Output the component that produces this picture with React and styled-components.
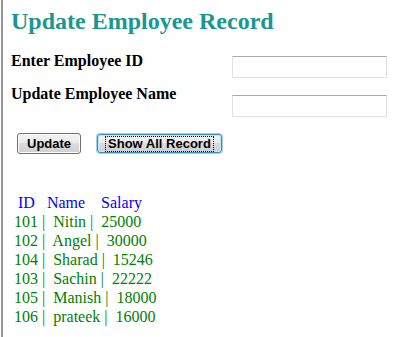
import styled, { createGlobalStyle } from "styled-components";

const GlobalStyle = createGlobalStyle`
  body {
    margin: 0;
    background: #fff;
    font-family: "Liberation Serif", "Times New Roman", serif;
  }
`;

const Page = styled.div`
  margin-left: 1px;
  border-left: 2px solid #959595;
  min-height: 337px;
  padding: 6px 0 0 8px;
  box-sizing: border-box;
`;

const Title = styled.h1`
  margin: 0;
  font-size: 24px;
  line-height: 30px;
  font-weight: bold;
  color: #1a9792;
`;

const Form = styled.div`
  display: flex;
  flex-direction: column;
  gap: 6px;
  margin-top: 15px;
`;

const Row = styled.div`
  display: flex;
  align-items: flex-start;
`;

const Label = styled.div`
  width: 221px;
  font-size: 16px;
  line-height: 19px;
  font-weight: bold;
  color: #000;
`;

const Input = styled.input`
  box-sizing: border-box;
  width: 155px;
  height: 22px;
  margin: ${(p) => p.$offset}px 0 0;
  padding: 0 3px;
  border: 1px solid #e0e1e6;
  border-top-color: #a8a8a8;
  border-radius: 0;
  outline: none;
  background: #fff;
`;

const Buttons = styled.div`
  display: flex;
  gap: 16px;
  margin: 16px 0 0 6px;
`;

const Button = styled.button`
  height: ${(p) => (p.$focused ? 19 : 21)}px;
  margin-top: ${(p) => (p.$focused ? 1 : 0)}px;
  padding: 0 ${(p) => (p.$focused ? 8 : 9)}px;
  font-family: "Liberation Sans", Arial, sans-serif;
  font-size: 13px;
  font-weight: bold;
  color: #000;
  border: 1px solid ${(p) => (p.$focused ? "#3b8dbd" : "#707070")};
  border-radius: 3px;
  background: linear-gradient(#f2f2f2 0%, #ebebeb 45%, #dddddd 50%, #cfcfcf 100%);
  box-shadow: ${(p) =>
    p.$focused ? "0 0 0 1px #9fd0ea, inset 0 0 0 1px #c6e5f5" : "inset 0 0 0 1px #fcfcfc"};
  display: flex;
  align-items: center;
  cursor: pointer;
`;

const FocusText = styled.span`
  outline: 1px dotted #000;
  outline-offset: 0;
  padding: 0 2px;
  line-height: 14px;
`;

const List = styled.div`
  margin: 39px 0 0 3px;
  font-size: 16px;
  line-height: 19px;
  white-space: pre;
`;

const HeaderLine = styled.div`
  color: #0000ff;
`;

const RecordLine = styled.div`
  color: #008000;
`;

const records = [
  ["101", "Nitin", "25000"],
  ["102", "Angel", "30000"],
  ["104", "Sharad", "15246"],
  ["103", "Sachin", "22222"],
  ["105", "Manish", "18000"],
  ["106", "prateek", "16000"],
];

function App() {
  return (
    <>
      <GlobalStyle />
      <Page>
        <Title>Update Employee Record</Title>
        <Form>
          <Row>
            <Label>Enter Employee ID</Label>
            <Input $offset={5} />
          </Row>
          <Row>
            <Label>Update Employee Name</Label>
            <Input $offset={11} />
          </Row>
        </Form>
        <Buttons>
          <Button>Update</Button>
          <Button $focused>
            <FocusText>Show All Record</FocusText>
          </Button>
        </Buttons>
        <List>
          <HeaderLine>{" ID   Name    Salary"}</HeaderLine>
          {records.map(([id, name, salary]) => (
            <RecordLine key={id}>{`${id} |  ${name} |  ${salary}`}</RecordLine>
          ))}
        </List>
      </Page>
    </>
  );
}

export default App;
